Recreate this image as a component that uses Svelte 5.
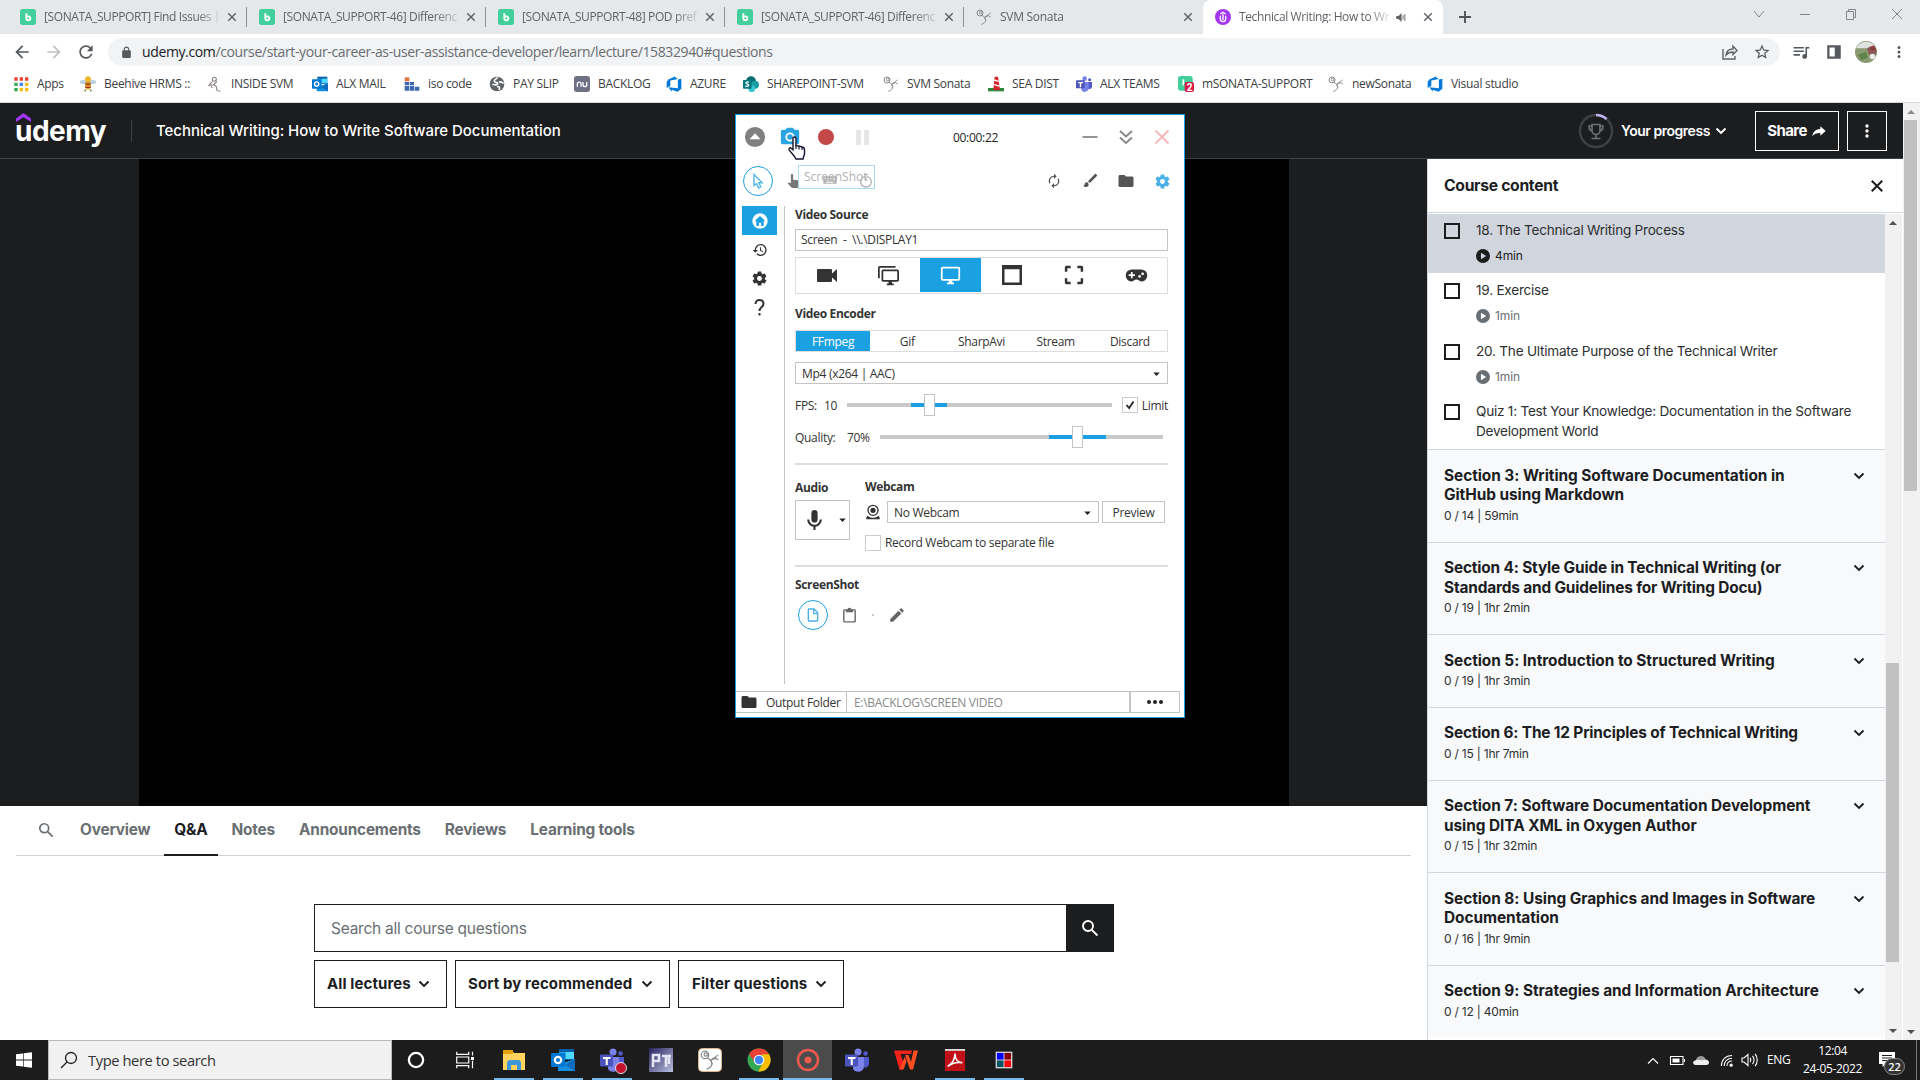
<script>
  const paths = {
    back: 'M20 11H7.83l5.59-5.59L12 4l-8 8 8 8 1.41-1.41L7.83 13H20v-2z',
    reload: 'M17.65 6.35C16.2 4.9 14.21 4 12 4c-4.42 0-7.99 3.58-7.99 8s3.57 8 7.99 8c3.73 0 6.84-2.55 7.73-6h-2.08c-.82 2.33-3.04 4-5.65 4-3.31 0-6-2.69-6-6s2.69-6 6-6c1.66 0 3.14.69 4.22 1.78L13 11h7V4l-2.35 2.35z',
    lock: 'M18 8h-1V6c0-2.76-2.24-5-5-5S7 3.24 7 6v2H6c-1.1 0-2 .9-2 2v10c0 1.1.9 2 2 2h12c1.1 0 2-.9 2-2V10c0-1.1-.9-2-2-2zM9 6c0-1.66 1.34-3 3-3s3 1.34 3 3v2H9V6z',
    star: 'M12,15.39L8.24,17.66L9.23,13.38L5.91,10.5L10.29,10.13L12,6.09L13.71,10.13L18.09,10.5L14.77,13.38L15.76,17.66M22,9.24L14.81,8.63L12,2L9.19,8.63L2,9.24L7.45,13.97L5.82,21L12,17.27L18.18,21L16.54,13.97L22,9.24Z',
    queue: 'M15 5H2v2h13V5zm0 4.500H2v2h13v-2zM2 16h8v-2H2v2zM17 5v9.180c-.31-.11-.65-.18-1-.18-1.660 0-3 1.340-3 3s1.340 3 3 3 3-1.340 3-3V7h3V5h-5z',
    panel: 'M3 3h18v18H3zM6 6v12h7V6z',
    dots: 'M12 8a2 2 0 1 0 0-4 2 2 0 0 0 0 4zm0 2a2 2 0 1 0 0 4 2 2 0 0 0 0-4zm0 6a2 2 0 1 0 0 4 2 2 0 0 0 0-4z',
    share: 'M14 9V5l8 7-8 7v-4c-6 0-9.500 1.500-12 5 .8-5 3.500-11 12-11z',
    gear: 'M12,15.5A3.5,3.5 0 0,1 8.5,12A3.5,3.5 0 0,1 12,8.5A3.5,3.5 0 0,1 15.5,12A3.5,3.5 0 0,1 12,15.5M19.43,12.97C19.47,12.65 19.5,12.33 19.5,12C19.5,11.67 19.47,11.34 19.43,11L21.54,9.37C21.73,9.22 21.78,8.95 21.66,8.73L19.66,5.27C19.54,5.05 19.27,4.96 19.05,5.05L16.56,6.05C16.04,5.66 15.5,5.32 14.87,5.07L14.5,2.42C14.46,2.18 14.25,2 14,2H10C9.75,2 9.54,2.18 9.5,2.42L9.13,5.07C8.5,5.32 7.96,5.66 7.44,6.05L4.95,5.05C4.73,4.96 4.46,5.05 4.34,5.27L2.34,8.73C2.21,8.95 2.27,9.22 2.46,9.37L4.57,11C4.53,11.34 4.5,11.67 4.5,12C4.5,12.33 4.53,12.65 4.57,12.97L2.46,14.63C2.27,14.78 2.21,15.05 2.34,15.27L4.34,18.73C4.46,18.95 4.73,19.03 4.95,18.95L7.44,17.94C7.96,18.34 8.5,18.68 9.13,18.93L9.5,21.58C9.54,21.82 9.75,22 10,22H14C14.25,22 14.46,21.82 14.5,21.58L14.87,18.93C15.5,18.67 16.04,18.34 16.56,17.94L19.05,18.95C19.27,19.03 19.54,18.95 19.66,18.73L21.66,15.27C21.78,15.05 21.73,14.78 21.54,14.63L19.43,12.97Z',
    history: 'M13.5,8H12V13L16.28,15.54L17,14.33L13.5,12.25V8M13,3A9,9 0 0,0 4,12H1L4.96,16.03L9,12H6A7,7 0 0,1 13,5A7,7 0 0,1 20,12A7,7 0 0,1 13,19C11.07,19 9.32,18.21 8.06,16.94L6.64,18.36C8.27,20 10.5,21 13,21A9,9 0 0,0 22,12A9,9 0 0,0 13,3',
    folder: 'M10,4H4C2.89,4 2,4.89 2,6V18A2,2 0 0,0 4,20H20A2,2 0 0,0 22,18V8C22,6.89 21.1,6 20,6H12L10,4Z',
    camera: 'M4,4H7L9,2H15L17,4H20A2,2 0 0,1 22,6V18A2,2 0 0,1 20,20H4A2,2 0 0,1 2,18V6A2,2 0 0,1 4,4M12,7A5,5 0 0,0 7,12A5,5 0 0,0 12,17A5,5 0 0,0 17,12A5,5 0 0,0 12,7M12,9A3,3 0 0,1 15,12A3,3 0 0,1 12,15A3,3 0 0,1 9,12A3,3 0 0,1 12,9Z',
    video: 'M17,10.5V7A1,1 0 0,0 16,6H3A1,1 0 0,0 2,7V18A1,1 0 0,0 3,19H16A1,1 0 0,0 17,18V14.500L22,19V6L17,10.5Z',
    monitor: 'M21,16H3V4H21M21,2H3C1.89,2 1,2.89 1,4V16A2,2 0 0,0 3,18H10V20H8V22H16V20H14V18H21A2,2 0 0,0 23,16V4C23,2.89 22.1,2 21,2Z',
    monitors: 'M22,17V7H6V17H22M22,5A2,2 0 0,1 24,7V17C24,18.11 23.1,19 22,19H16V21H18V23H10V21H12V19H6C4.89,19 4,18.11 4,17V7A2,2 0 0,1 6,5H22M2,3V15H0V3A2,2 0 0,1 2,1H20V3H2Z',
    window: 'M0,0H24V24H0V0M3,5V21H21V5H3Z',
    region: 'M1 8V3a2 2 0 0 1 2-2h5v3H4v4zM16 1h5a2 2 0 0 1 2 2v5h-3V4h-4zM23 16v5a2 2 0 0 1-2 2h-5v-3h4v-4zM8 23H3a2 2 0 0 1-2-2v-5h3v4h4z',
    pad: 'M6.500 5h11a7 7 0 0 1 1 13.900c-3 .3-4-2.400-6.500-2.400s-3.500 2.700-6.500 2.400A7 7 0 0 1 6.500 5zM5.600 8v2.600H3v2h2.600v2.600h2v-2.600h2.600v-2H7.600V8zM15.500 11.500a1.600 1.600 0 1 0 0 3.200 1.600 1.600 0 0 0 0-3.200zM19 8.500a1.600 1.600 0 1 0 0 3.200 1.600 1.600 0 0 0 0-3.200z',
    mic: 'M12,2A3,3 0 0,1 15,5V11A3,3 0 0,1 12,14A3,3 0 0,1 9,11V5A3,3 0 0,1 12,2M19,11C19,14.53 16.39,17.44 13,17.93V21H11V17.93C7.61,17.44 5,14.53 5,11H7A5,5 0 0,0 12,16A5,5 0 0,0 17,11H19Z',
    sync: 'M12,6V9L16,5L12,1V4A8,8 0 0,0 4,12C4,13.57 4.46,15.03 5.24,16.26L6.7,14.8C6.25,13.97 6,13 6,12A6,6 0 0,1 12,6M18.76,7.74L17.3,9.2C17.74,10.04 18,11 18,12A6,6 0 0,1 12,18V15L8,19L12,23V20A8,8 0 0,0 20,12C20,10.43 19.54,8.97 18.76,7.74Z',
    brush: 'M22.400 3.100L20.900 1.600C20.500 1.200 19.900 1.200 19.400 1.600L9,12.2L11.75,15L22.400 4.600C22.800 4.200 22.800 3.500 22.400 3.100M7,14A3,3 0 0,0 4,17C4,18.31 2.84,19 2,19C2.92,20.22 4.5,21 6,21A4,4 0 0,0 10,17A3,3 0 0,0 7,14Z',
    pencil: 'M20.71,7.04C21.1,6.65 21.1,6 20.71,5.63L18.37,3.29C18,2.9 17.35,2.9 16.96,3.29L15.12,5.12L18.87,8.87M3,17.25V21H6.75L17.81,9.93L14.06,6.18L3,17.25Z',
    timer: 'M12,20A7,7 0 0,1 5,13A7,7 0 0,1 12,6A7,7 0 0,1 19,13A7,7 0 0,1 12,20M12,4A9,9 0 0,0 3,13A9,9 0 0,0 12,22A9,9 0 0,0 21,13A9,9 0 0,0 12,4M9,1V3H11V10H13V3H15V1Z',
    hand: 'M9 1.500c1 0 1.700.8 1.700 1.700V10l6.800 1c1.300.3 2.300 1.200 2.300 2.600l-1.300 7c-.2 1-1 1.900-2.100 1.900H9.800c-.7 0-1.300-.3-1.700-.8L2.500 15.500l1-1c.4-.4.900-.5 1.500-.3l2.300 1V3.200c0-1 .8-1.700 1.700-1.700z',
    keys: 'M2 5h20v11H2zM4 7v1.500h2V7zm4 0v1.500h2V7zm4 0v1.500h2V7zm4 0v1.500h3V7zM4 10v1.500h2V10zm4 0v1.500h2V10zm4 0v1.500h2V10zm4 0v1.500h3V10zM6 13v1.500h11V13z',
    page: 'M6 2h8l6 6v12a2 2 0 0 1-2 2H6a2 2 0 0 1-2-2V4c0-1.100.9-2 2-2zm0 2v16h12v-9h-6V4zm8 .8V9h4z',
    clip: 'M19 3h-4.200a3 3 0 0 0-5.600 0H5a2 2 0 0 0-2 2v15a2 2 0 0 0 2 2h14a2 2 0 0 0 2-2V5a2 2 0 0 0-2-2zM5 5h2v2.500h10V5h2v15H5z',
    home: 'M12 .5a11.500 11.500 0 1 0 0 23 11.500 11.500 0 0 0 0-23zM12 4.500l8 7.500h-2.500v7.500h-4v-5h-3v5h-4V12H4z',
    up: 'M12 1a11 11 0 1 0 0 22 11 11 0 0 0 0-22zM12 8l6 6.500H6z',
    cam: 'M12 1a8.500 8.500 0 1 0 0 17 8.500 8.500 0 0 0 0-17zm0 2a6.500 6.500 0 1 1 0 13 6.500 6.500 0 0 1 0-13zm0 2.500a4 4 0 1 0 0 8 4 4 0 0 0 0-8zM4 17.500l-2 2.500v3h20v-3l-2-2.500c-2 2-5 3-8 3s-6-1-8-3z',
    play: 'M12 0a12 12 0 1 0 0 24 12 12 0 0 0 0-24zM8.500 6.500l9 5.500-9 5.500z'
  };

  // Multi-colour artwork, drawn in a 24-unit box
  const knot = '<g fill="none" stroke="#8a8a8a" stroke-width="1.500"><circle cx="6" cy="6" r="4.500"/><circle cx="7" cy="5.500" r="2"/><path d="M9 9.500c3 1.500 5 4 6 8M22 6c-3 1-3 3-6 4-2 1-3 3-2 6 1 4-3 6-6 7M13 12l6-2 3 2"/></g>';
  const devops = '<path fill="#0078d7" d="M1 8.500l3-3.800L12 1.600V.2l5.600 4.200L6.500 6.600v8.600L3.400 16 1 18.500zM23 4v15l-5.600 4.500-8.800-3v3L3.600 17l14.200 1.400V5.200z"/>';
  const teams = '<circle cx="13" cy="4" r="3.500" fill="#7b83eb"/><circle cx="20.500" cy="5.500" r="2.300" fill="#5059c9"/><path d="M17 9h7v7a4 4 0 0 1-6 3z" fill="#5059c9"/><path d="M8 9h11v8a6 6 0 0 1-11 4z" fill="#7b83eb"/><rect y="6.500" width="13" height="12" rx="1" fill="#4b53bc"/><path d="M3 9h7.500v2H7.800v6H5.700v-6H3z" fill="#fff"/>';
  const outlook = '<path fill="#0a5ea8" d="M8 1h15v11H8z"/><path fill="#28a8ea" d="M8 4h7v7H8z"/><path fill="#50d9ff" d="M15 4h8v7h-8z"/><path fill="#1490df" d="M7 11l8 3 9-3v12H7z"/><path fill="#0f6cbd" d="M24 11L14 17l10 6z"/><rect y="5" width="14" height="14" rx="1" fill="#0078d4"/><circle cx="7" cy="12" r="3.200" fill="none" stroke="#fff" stroke-width="2.200"/>';
  const art = {
    b: '<rect width="24" height="24" rx="4" fill="#42cf9c"/><path d="M9.500 6.500V14M9.500 14a3 3 0 1 0 3-3c-1.600 0-3 1.200-3 3z" fill="none" stroke="#fff" stroke-width="2.800"/>',
    b2: '<rect width="22" height="22" rx="4" fill="#42cf9c"/><path d="M8 5v9" stroke="#fff" stroke-width="2.500"/><rect x="10" y="9" width="14" height="15" rx="3" fill="#d81b4a"/><text x="13" y="22" font-family="Roboto" font-weight="700" font-size="15" fill="#fff">2</text>',
    knot,
    u: '<circle cx="12" cy="12" r="12" fill="#a435f0"/><path d="M8 10v5a4 4 0 0 0 8 0v-5M8 7.500l4-2.500 4 2.500M12 8v9" fill="none" stroke="#fff" stroke-width="2"/>',
    apps: '<g fill="#ea4335"><path d="M2 2h5v5H2zM10 2h5v5h-5zM18 2h5v5h-5z"/></g><path fill="#34a853" d="M2 10h5v5H2zM2 18h5v5H2z"/><path fill="#4285f4" d="M10 10h5v5h-5z"/><path fill="#fbbc04" d="M18 10h5v5h-5zM10 18h5v5h-5zM18 18h5v5h-5z"/>',
    bee: '<ellipse cx="5" cy="9" rx="5" ry="3" fill="#b9cfe0"/><ellipse cx="19" cy="9" rx="5" ry="3" fill="#b9cfe0"/><circle cx="12" cy="5" r="4.500" fill="#f0b929"/><ellipse cx="12" cy="14" rx="4.500" ry="6" fill="#d9a520"/><path d="M8 11h8v2H8zM8 16h8v2H8z" fill="#b0332a"/><path d="M9 20l-2 3M15 20l2 3" stroke="#6d8a3a" stroke-width="2"/>',
    walk: '<g fill="none" stroke="#8a7f80" stroke-width="1.600"><circle cx="11" cy="5" r="3"/><path d="M8 8l-5 6 7-1 5-5M10 13l4 3 1 6 5 1M6 15l2 3"/></g>',
    outlook,
    iso: '<path fill="#e0763f" d="M1 2h7v6H1z"/><path fill="#3c68b0" d="M1 9h7v5H1zM9 9h6v5H9zM1 15h7v7H1zM9 15h6v7H9zM16 16h7v6h-7z"/>',
    globe: '<circle cx="12" cy="12" r="11" fill="#5f6368"/><path d="M13 2c-2 3-6 3-5 6s6 1 5 4-6 0-8 1M15 9c3-1 5 1 7 2M12 16c3-1 5 1 3 5" fill="none" stroke="#fff" stroke-width="2.400"/>',
    nu: '<rect width="24" height="24" rx="4" fill="#6f6f86"/><path d="M5 16v-4a2.800 2.800 0 0 1 5.600 0v4M13.500 9v4a2.800 2.800 0 0 0 5.600 0V9" fill="none" stroke="#fff" stroke-width="2"/>',
    devops,
    sp: '<circle cx="12" cy="8" r="7.500" fill="#036c70"/><circle cx="18" cy="13" r="6" fill="#1a9ba1"/><circle cx="13" cy="19" r="5" fill="#37c6d0"/><rect y="6" width="13" height="13" rx="1" fill="#03787c"/><path d="M9 9.500c-3-1.500-5 .2-4.500 1.500.7 1.500 4.200 1 4 3-.2 1.800-3 2-5 .8" fill="none" stroke="#fff" stroke-width="1.800"/>',
    sea: '<path d="M0 18h24v5H0z" fill="#2c8a3c"/><path d="M10 1h5l3 20H8z" fill="#d4232c"/><path d="M10 5l6 2v2l-7-2zM9 12l8 2v2l-8-2z" fill="#fff"/>',
    teams,
    pt: '<linearGradient id="ptg" x1="0" y1="0" x2="1" y2="1"><stop offset="0" stop-color="#27215f"/><stop offset="1" stop-color="#b9c0de"/></linearGradient><rect width="24" height="24" fill="url(#ptg)"/><path d="M4 19V7h6v6H4M13 8h9M17 8v11M20 8v8" fill="none" stroke="#e6e4f4" stroke-width="2.600"/>',
    knotbox: '<rect x=".5" y=".5" width="23" height="23" rx="4" fill="#fff" stroke="#e0b58e"/><g transform="translate(2 2) scale(.83)">' + knot + '</g>',
    explorer: '<path d="M1 2h9l2 3h11v17H1z" fill="#ffd35c"/><path d="M1 2h10v4H1z" fill="#e3a008"/><path d="M5 22v-8l2-2h10l2 2v8h-4v-5H9v5z" fill="#3e96dc"/>',
    chrome: '<circle cx="12" cy="12" r="11.500" fill="#34a853"/><path d="M12 .5A11.500 11.500 0 0 1 22 6.300L12 7 8 14.500 2 6.300A11.500 11.500 0 0 1 12 .5z" fill="#ea4335"/><path d="M22 6.300a11.500 11.500 0 0 1-10.800 17.200L16.500 14 15 6.300z" fill="#fbbc04"/><circle cx="12" cy="12" r="5.300" fill="#fff"/><circle cx="12" cy="12" r="4.200" fill="#4285f4"/>',
    rec: '<circle cx="12" cy="12" r="10" fill="none" stroke="#ec5b4d" stroke-width="2.600"/><circle cx="12" cy="12" r="3.500" fill="#ec5b4d"/>',
    wps: '<path d="M0 2.500h18l-1 3.500H6.500l3.500 10-2 5.500H5.500z" fill="#f5231c"/><path d="M5.500 21.500h4l3-8-1.800-5-2.500 7z" fill="#ff4a26"/><path d="M11 7l5 14.500h3L24 2.500h-4.500L17 14l-2.500-7z" fill="#ff4f22"/>',
    pdf: '<rect x="1" width="22" height="24" fill="#c01018"/><path d="M1 0h22v2H1z" fill="#ddd"/><path d="M4 19c5-3 8-8 8-14 0 6 3 10 8 10-6-1-11 0-16 4z" fill="none" stroke="#fff" stroke-width="1.700"/>',
    flag: '<rect x="2" y="2" width="20" height="20" fill="#ddd"/><path fill="#00f" d="M3.500 3.500h8v8h-8z"/><path fill="#8b0000" d="M12.500 3.500h8v8h-8z"/><path fill="#0b5563" d="M3.500 12.500h8v8h-8z"/><path fill="red" d="M12.500 12.500h8v8h-8z"/>',
    start: '<path fill="#fff" d="M0 3.500l10.500-1.400v9.300H0zM11.500 2L24 .3v11.100H11.500zM0 12.600h10.500v9.300L0 20.500zM11.500 12.600H24v11.100L11.500 22z"/>',
    cortana: '<circle cx="12" cy="12" r="9.500" fill="none" stroke="#fff" stroke-width="3"/>',
    taskview: '<g fill="none" stroke="#fff" stroke-width="1.600"><path d="M1 1v3.500h16V1M1 23v-3.500h16V23M1 8h16v8H1zM22 1v5M22 13v10"/></g><path fill="#fff" d="M20 8h4v4h-4z"/>',
    avatar: '<circle cx="12" cy="12" r="12" fill="#8a9a70"/><path d="M1 8a12 12 0 0 1 22 0z" fill="#dfe3df"/><path d="M13 8l7-3 4 6-4 9-5-6z" fill="#8d5a58"/><path d="M15 7l6-2 2 4-4 2z" fill="#8a3b40"/><circle cx="19" cy="17" r="3" fill="#eee"/><path d="M3 15l9-3 2 6-7 3z" fill="#5f8248"/>'
  };

  const tabs = [
    { icon: 'b', text: '[SONATA_SUPPORT] Find Issues |' },
    { icon: 'b', text: '[SONATA_SUPPORT-46] Differenc' },
    { icon: 'b', text: '[SONATA_SUPPORT-48] POD pref' },
    { icon: 'b', text: '[SONATA_SUPPORT-46] Differenc' },
    { icon: 'knot', text: 'SVM Sonata', plain: true },
    { icon: 'u', text: 'Technical Writing: How to Wr', active: true }
  ];
  const bookmarks = [
    ['apps', 'Apps'], ['bee', 'Beehive HRMS ::'], ['walk', 'INSIDE SVM'], ['outlook', 'ALX MAIL'], ['iso', 'iso code'],
    ['globe', 'PAY SLIP'], ['nu', 'BACKLOG'], ['devops', 'AZURE'], ['sp', 'SHAREPOINT-SVM'], ['knot', 'SVM Sonata'],
    ['sea', 'SEA DIST'], ['teams', 'ALX TEAMS'], ['b2', 'mSONATA-SUPPORT'], ['knot', 'newSonata'], ['devops', 'Visual studio']
  ];
  const lectures = [
    { title: '18. The Technical Writing Process', time: '4min', on: true },
    { title: '19. Exercise', time: '1min' },
    { title: '20. The Ultimate Purpose of the Technical Writer', time: '1min' }
  ];
  const sections = [
    [['Section 3: Writing Software Documentation in', 'GitHub using Markdown'], '0 / 14 | 59min'],
    [['Section 4: Style Guide in Technical Writing (or', 'Standards and Guidelines for Writing Docu)'], '0 / 19 | 1hr 2min'],
    [['Section 5: Introduction to Structured Writing'], '0 / 19 | 1hr 3min'],
    [['Section 6: The 12 Principles of Technical Writing'], '0 / 15 | 1hr 7min'],
    [['Section 7: Software Documentation Development', 'using DITA XML in Oxygen Author'], '0 / 15 | 1hr 32min'],
    [['Section 8: Using Graphics and Images in Software', 'Documentation'], '0 / 16 | 1hr 9min'],
    [['Section 9: Strategies and Information Architecture'], '0 / 12 | 40min']
  ];
  const pageTabs = ['Overview', 'Q&A', 'Notes', 'Announcements', 'Reviews', 'Learning tools'];
  const apps = [
    ['cortana', 's18'], ['taskview', 's18'], ['explorer', 's24', 'open'], ['outlook', 's24', 'open'], ['teams', 's24', 'open dot'],
    ['pt', 's24'], ['knotbox', 's24'], ['chrome', 's24', 'open'], ['rec', 's24', 'current'], ['teams', 's24'],
    ['wps', 's24'], ['pdf', 's22', 'open'], ['flag', 's20', 'open']
  ];
  const sources = ['video', 'monitors', 'monitor', 'window', 'region', 'pad'];
  const encoders = ['FFmpeg', 'Gif', 'SharpAvi', 'Stream', 'Discard'];
</script>

{#snippet ic(name, size)}
  <svg class={size} viewBox="0 0 24 24" fill="currentColor" fill-rule="evenodd"><path d={paths[name]} /></svg>
{/snippet}
{#snippet pic(name, size)}
  <svg class={size} viewBox="0 0 24 24">{@html art[name]}</svg>
{/snippet}
{#snippet chevron(size)}
  <svg class={size} viewBox="0 0 12 12" fill="none" stroke="currentColor" stroke-width="1.900"><path d="M1.500 3.500L6 8l4.500-4.500" /></svg>
{/snippet}
{#snippet cross(size)}
  <svg class={size} viewBox="0 0 12 12" fill="none" stroke="currentColor" stroke-width="1.700"><path d="M1.500 1.500l9 9M10.500 1.500l-9 9" /></svg>
{/snippet}
{#snippet lens(size)}
  <svg class={size} viewBox="0 0 18 18" fill="none" stroke="currentColor" stroke-width="1.900"><circle cx="7" cy="7" r="5" /><path d="M10.800 10.800L16.500 16.500" /></svg>
{/snippet}
{#snippet caret()}
  <svg class="caret" viewBox="0 0 8 5"><path d="M0 .5h8L4 5z" fill="#222" /></svg>
{/snippet}

<div class="screen">
  <div class="strip">
    {#each tabs as t}
      <div class="tab" class:active={t.active} class:plain={t.plain}>
        {@render pic(t.icon, 's16')}
        <span class="tabtext">{t.text}</span>
        {#if t.active}
          <svg class="sound" viewBox="0 0 14 12"><path d="M0 4h3l4-4v12L3 8H0z" fill="#5f6368" /><path d="M9 3v6M11.500 1.500v9" stroke="#5f6368" stroke-width="1.200" /></svg>
        {/if}
        {@render cross('s9')}
      </div>
    {/each}
    <svg class="plus" viewBox="0 0 12 12"><path d="M6 0v12M0 6h12" stroke="#50545a" stroke-width="1.900" /></svg>
    <div class="winctl">
      <svg viewBox="0 0 12 12"><path d="M1 3l5 6 5-6" /></svg>
      <svg viewBox="0 0 12 12"><path d="M1 6.500h10" /></svg>
      <svg viewBox="0 0 12 12"><path d="M1.500 3.500h7v8h-7zM3.500 3.500v-2h7v8h-2" /></svg>
      <svg viewBox="0 0 12 12"><path d="M1 1l10 10M11 1L1 11" /></svg>
    </div>
  </div>

  <div class="toolbar">
    <div class="nav">
      {@render ic('back', 's20')}
      <span class="fwd">{@render ic('back', 's20')}</span>
      {@render ic('reload', 's20')}
    </div>
    <div class="address">
      {@render ic('lock', 's13')}
      <span class="url"><b>udemy.com</b>/course/start-your-career-as-user-assistance-developer/learn/lecture/15832940#questions</span>
      <svg class="s16" viewBox="0 0 16 16" fill="none" stroke="#5f6368" stroke-width="1.400"><path d="M1 5v10h12v-3M4 11c.5-4 3-6 7-6V2l4 4.500-4 4V8c-3 0-5 .6-7 3z" /></svg>
      {@render ic('star', 's18')}
    </div>
    <div class="tools">
      {@render ic('queue', 's19')}
      {@render ic('panel', 's18')}
      {@render pic('avatar', 's22')}
      {@render ic('dots', 's18')}
    </div>
  </div>

  <div class="bookmarks">
    {#each bookmarks as [icon, text]}
      <div class="mark">{@render pic(icon, 's16')}<span>{text}</span></div>
    {/each}
  </div>

  <div class="page">
    <div class="view">
      <header>
        <div class="logo"><svg class="hat" viewBox="0 0 15 9"><path d="M0 5.500L7.500 0 15 5.500V9L7.500 4.200 0 9z" fill="#a435f0" /></svg><span>udemy</span></div>
        <div class="rule"></div>
        <h1>Technical Writing: How to Write Software Documentation</h1>
        <svg class="trophy" viewBox="0 0 36 36" fill="none"><circle cx="18" cy="18" r="16" stroke="#3e4143" stroke-width="2.500" /><path d="M18 2a16 16 0 0 1 10.500 4" stroke="#c0b4f0" stroke-width="2.500" /><path d="M14 11.500h8v6a4 4 0 0 1-8 0zM14 13h-3c0 3 1 5 3.500 5M22 13h3c0 3-1 5-3.500 5M18 21.500V25M13.500 25.500h9" stroke="#6a6f73" stroke-width="1.700" /></svg>
        <span class="progress">Your progress</span>
        {@render chevron('s12')}
        <div class="btn share">Share {@render ic('share', 's16')}</div>
        <div class="btn more">{@render ic('dots', 's20')}</div>
      </header>
      <div class="columns">
        <main>
          <div class="player"><div class="video"></div></div>
          <nav>
            <span class="find">{@render lens('s16')}</span>
            {#each pageTabs as p}
              <span class="ptab" class:chosen={p === 'Q&A'}>{p}</span>
            {/each}
          </nav>
          <div class="qa">
            <div class="searchrow">
              <div class="field">Search all course questions</div>
              <div class="go">{@render lens('s18')}</div>
            </div>
            <div class="filters">
              <div class="filter f1">All lectures {@render chevron('s12')}</div>
              <div class="filter f2">Sort by recommended {@render chevron('s12')}</div>
              <div class="filter f3">Filter questions {@render chevron('s12')}</div>
            </div>
          </div>
        </main>
        <aside>
          <div class="asidehead"><h2>Course content</h2>{@render cross('s14')}</div>
          <div class="scroller">
            <div class="list">
              {#each lectures as l}
                <div class="lecture" class:on={l.on}>
                  <i class="box"></i>
                  <div><p>{l.title}</p><p class="time">{@render ic('play', 's14')}{l.time}</p></div>
                </div>
              {/each}
              <div class="lecture quiz">
                <i class="box"></i>
                <div><p>Quiz 1: Test Your Knowledge: Documentation in the Software</p><p>Development World</p></div>
              </div>
              {#each sections as [lines, meta]}
                <section class:single={lines.length === 1}>
                  <div class="st">
                    {#each lines as line}<h3>{line}</h3>{/each}
                    <p class="meta">{meta}</p>
                  </div>
                  {@render chevron('s12')}
                </section>
              {/each}
            </div>
            <div class="bar inner"><svg viewBox="0 0 8 4"><path d="M0 4L4 0l4 4z" fill="#505050" /></svg><div class="thumb"></div><svg viewBox="0 0 8 4"><path d="M0 0h8L4 4z" fill="#505050" /></svg></div>
          </div>
        </aside>
      </div>
    </div>
    <div class="bar outer"><svg viewBox="0 0 8 4"><path d="M0 4L4 0l4 4z" fill="#8b8b8b" /></svg><div class="thumb"></div><svg viewBox="0 0 8 4"><path d="M0 0h8L4 4z" fill="#505050" /></svg></div>
  </div>

  <footer>
    <div class="startbtn">{@render pic('start', 's16')}</div>
    <div class="tasksearch">
      <svg class="s18" viewBox="0 0 18 18" fill="none" stroke="#1c1c1c" stroke-width="1.300"><circle cx="11" cy="7" r="5.500" /><path d="M7 11l-6 6" /></svg>
      <span>Type here to search</span>
    </div>
    <div class="apps">
      {#each apps as [name, size, state]}
        <div class="app {state ?? ''}">{@render pic(name, size)}</div>
      {/each}
    </div>
    <div class="tray">
      <svg class="tup" viewBox="0 0 12 7"><path d="M1 6.500l5-5 5 5" /></svg>
      <svg class="tbat" viewBox="0 0 15 9"><path d="M.5.5h12.500v8H.5zM14.500 3v3" /><path d="M2.500 2.500h7v4h-7z" fill="#fff" stroke="none" /></svg>
      <svg class="tcloud" viewBox="0 0 16 10"><path d="M3 6a5 5 0 0 1 9-3l1 4H3z" fill="#999" stroke="none" /><path d="M1 6c3-2 6-1 8-.5 3-2 7-.5 7 2 0 1.500-1 2.500-2.500 2.500h-11C0 10-.5 7 1 6z" fill="#eee" stroke="none" /></svg>
      <svg class="twifi" viewBox="0 0 14 14"><path d="M1.500 13C1.500 6 6 1.500 13 1.500M4.500 13c0-5 3.500-8.500 8.500-8.500M7.500 13c0-3.500 2-5.500 5.500-5.500" /><circle cx="12" cy="12" r="1.700" fill="#fff" stroke="none" /></svg>
      <svg class="tvol" viewBox="0 0 17 14"><path d="M1 5h2l4-3.500v11L3 9H1zM9 5c1 1 1 3 0 4M11.500 3c2 2 2 6 0 8M14 1c3 3 3 9 0 12" /></svg>
      <span class="eng">ENG</span>
      <div class="clock"><span>12:04</span><span>24-05-2022</span></div>
      <div class="note"><svg viewBox="0 0 16 15"><path d="M0 0h16v12h-9l-3.500 3v-3H0z" fill="#fff" stroke="none" /><path d="M3 3.500h10M3 6h10M3 8.500h6" stroke="#1c1c1c" stroke-width="1.200" /></svg><em>22</em></div>
    </div>
  </footer>

  <div class="recorder">
    <div class="rrow">
      <div class="group top">
        <i class="gray">{@render ic('up', 's22')}</i>
        <i class="blue">{@render ic('camera', 's22')}</i>
        <i><b class="disc"></b></i>
        <i><b class="pause"></b></i>
      </div>
      <div class="timer">00:00:22</div>
      <div class="group wctl">
        <i><svg viewBox="0 0 16 16"><path d="M.5 8h15" stroke="#8a8a8a" stroke-width="1.800" /></svg></i>
        <i><svg viewBox="0 0 16 16" fill="none"><path d="M2 2l6 5.500L14 2M2 8.500L8 14l6-5.500" stroke="#8a8a8a" stroke-width="2" /></svg></i>
        <i><svg viewBox="0 0 16 16"><path d="M1.500 1.500l13 13M14.500 1.500l-13 13" stroke="#f5b9b9" stroke-width="1.900" /></svg></i>
      </div>
    </div>
    <div class="rrow second">
      <div class="group">
        <i><b class="ring"><svg class="s16" viewBox="0 0 16 16" fill="none" stroke="#57b9ea" stroke-width="1.400"><path d="M4 1.500v11l2.500-2 2 4.500 2.300-1-2-4.300h3.400z" /></svg></b></i>
        <i class="mid">{@render ic('hand', 's15')}</i>
        <i class="mid">{@render ic('keys', 's16')}</i>
        <i class="mid">{@render ic('timer', 's15')}</i>
      </div>
      <div class="group dark">
        <i>{@render ic('sync', 's15')}</i>
        <i>{@render ic('brush', 's16')}</i>
        <i>{@render ic('folder', 's18')}</i>
        <i class="sky">{@render ic('gear', 's17')}</i>
      </div>
    </div>
    <div class="rbody">
      <div class="rside">
        <i class="sel">{@render ic('home', 's15')}</i>
        <i>{@render ic('history', 's16')}</i>
        <i>{@render ic('gear', 's17')}</i>
        <i><svg class="s17" viewBox="0 0 17 17" fill="none" stroke="currentColor" stroke-width="2"><path d="M4.500 5c0-5.300 8-5.300 8 0 0 3-4 3.300-4 7M8.500 14v2.400" /></svg></i>
      </div>
      <div class="pane">
        <h4>Video Source</h4>
        <div class="input source">Screen&nbsp; - &nbsp;\\.\DISPLAY1</div>
        <div class="sources">
          {#each sources as s}<i class:sel={s === 'monitor'}>{@render ic(s, s === 'region' || s === 'window' ? 's20' : s === 'video' ? 's24' : 's21')}</i>{/each}
        </div>
        <h4 class="enc">Video Encoder</h4>
        <div class="encoders">
          {#each encoders as e, n}<span class:sel={n === 0}>{e}</span>{/each}
        </div>
        <div class="input low codec"><span>Mp4 (x264 | AAC)</span>{@render caret()}</div>
        <div class="slider fps">
          <span class="lab">FPS:</span><span class="val">10</span>
          <div class="track"><b></b><u></u></div>
          <i class="check"><svg viewBox="0 0 16 16"><path d="M4 8l3 3.500L12 4" fill="none" stroke="#222" stroke-width="2" /></svg></i>
          <span>Limit</span>
        </div>
        <div class="slider quality">
          <span class="lab">Quality:</span><span class="val">70%</span>
          <div class="track"><b></b><u></u></div>
        </div>
        <div class="av">
          <div class="audio"><h4>Audio</h4><div class="micbox">{@render ic('mic', 's25')}{@render caret()}</div></div>
          <div class="web">
            <h4>Webcam</h4>
            <div class="webrow">{@render ic('cam', 's16')}<div class="input low cams"><span>No Webcam</span>{@render caret()}</div><div class="input low preview">Preview</div></div>
            <div class="webrow sep"><i class="check"></i><span>Record Webcam to separate file</span></div>
          </div>
        </div>
        <h4 class="shot">ScreenShot</h4>
        <div class="shots">
          <i><b class="ring sky">{@render ic('page', 's16')}</b></i>
          <i>{@render ic('clip', 's17')}</i>
          <i class="tiny"><b></b></i>
          <i>{@render ic('pencil', 's18')}</i>
        </div>
      </div>
    </div>
    <div class="out">
      <div class="o1">{@render ic('folder', 's18')}<span>Output Folder</span></div>
      <div class="o2">E:\BACKLOG\SCREEN VIDEO</div>
      <div class="o3"><b></b><b></b><b></b></div>
    </div>
    <div class="tip">ScreenShot</div>
    <svg class="cursor" viewBox="0 0 18 24"><path d="M5 2.500c0-2 3-2 3 0v7l5.500 1.200c2 .4 3 1.300 3 3v3.800c0 1.500-1 3-1.500 5.500H8C6.500 19.500 3 17 1.200 13.800c-.8-1.500.8-2.600 2-1.600L5 13.800z" fill="#fff" stroke="#15152c" stroke-width="1.400" /><path d="M8 9v4M11 10.500v3M14 11.500v2.500" stroke="#15152c" stroke-width="1.200" /></svg>
  </div>
</div>

<style>
  :global(body) { margin: 0; }
  .screen { position: relative; width: 1920px; height: 1080px; overflow: hidden; display: flex; flex-direction: column; background: #fff; font-family: 'Open Sans', sans-serif; font-size: 12px; line-height: 1; color: #3c4043; white-space: nowrap; }
  .screen :global(*) { box-sizing: border-box; }
  svg { display: block; flex: none; overflow: visible; }
  h1, h2, h3, h4, p { margin: 0; }
  i, em, u { font-style: normal; text-decoration: none; }
  .s9 { width: 10px; height: 10px; } .s12 { width: 12px; height: 12px; } .s13 { width: 13px; height: 13px; }
  .s14 { width: 14px; height: 14px; } .s15 { width: 16px; height: 16px; } .s16 { width: 16px; height: 16px; } .s17 { width: 17px; height: 17px; }
  .s18 { width: 18px; height: 18px; } .s19 { width: 19px; height: 19px; } .s20 { width: 20px; height: 20px; } .s21 { width: 21px; height: 21px; }
  .s22 { width: 22px; height: 22px; } .s24 { width: 24px; height: 24px; } .s25 { width: 25px; height: 25px; }

  .strip { height: 34px; flex: none; background: #e4e8eb; display: flex; align-items: center; padding-left: 8px; }
  .tab { width: 239px; height: 34px; display: flex; align-items: center; padding: 0 10px 0 12px; color: #5f6368; background: linear-gradient(#8e9296, #8e9296) right center / 1px 20px no-repeat; }
  .tab.plain { background: none; }
  .tab.active { width: 240px; background: #fff; border-radius: 8px 8px 0 0; }
  .tabtext { flex: 1; margin: 0 7px 0 8px; letter-spacing: -.38px; mask-image: linear-gradient(90deg, #000 86%, rgba(0, 0, 0, .15)); }
  .plain .tabtext { letter-spacing: -.28px; }
  .sound { width: 11px; height: 9px; margin-right: 16px; }
  .active .tabtext { width: 150px; flex: 1 0 150px; }
  .plus { width: 12px; height: 12px; margin-left: 16px; }
  .winctl { margin: -6px 17px 0 auto; display: flex; gap: 34px; }
  .winctl svg { width: 12px; height: 12px; fill: none; stroke: #80868b; stroke-width: 1; }

  .toolbar { height: 32px; flex: none; padding-top: 4px; display: flex; color: #55595e; }
  .nav { width: 108px; display: flex; align-items: center; gap: 12px; padding-left: 12px; }
  .fwd { transform: scaleX(-1); color: #bfc1c4; }
  .address { width: 1672px; height: 28px; border-radius: 14px; background: #f1f3f4; display: flex; align-items: center; padding: 0 9px 0 12px; }
  .url { flex: 1; margin-left: 9px; font-size: 14px; letter-spacing: -.375px; color: #696d72; }
  .url b { font-weight: 400; color: #202124; }
  .address .s18 { margin-left: 15px; }
  .tools { display: flex; align-items: center; padding-left: 12px; gap: 14px; }
  .tools .s22 { margin-left: -2px; }
  .tools .s18:last-child { margin-left: -1px; }

  .bookmarks { height: 37px; flex: none; padding-left: 13px; border-bottom: 1px solid #d6d8da; display: grid; align-items: center; grid-template-columns: 67px 127px 105px 92px 85px 85px 92px 77px 140px 105px 88px 102px 150px 99px 120px; }
  .mark { display: flex; align-items: center; gap: 8px; letter-spacing: -.3px; }

  .page { height: 937px; display: flex; }
  .view { width: 1903px; font-family: Inter, 'Liberation Sans', sans-serif; color: #1c1d1f; }
  header { height: 56px; background: #1c1d1f; border-bottom: 1px solid #3e4143; display: flex; align-items: center; color: #fff; }
  .logo { position: relative; width: 115px; padding-left: 15px; }
  .logo span { display: block; font: 700 28px/34px Inter, sans-serif; letter-spacing: -.500px; }
  .hat { position: absolute; left: 16px; top: -1px; width: 15px; height: 9px; }
  .rule { width: 1px; height: 22px; background: #3e4143; margin-left: 16px; }
  h1 { margin-left: 24px; font-size: 15px; font-weight: 500; letter-spacing: -.05px; }
  .trophy { width: 36px; height: 36px; margin-left: auto; margin-right: 6px; }
  .progress { width: 95px; padding-left: 1px; font-size: 14px; font-weight: 600; letter-spacing: -.47px; }
  .btn { height: 40px; border: 1px solid #fff; display: flex; align-items: center; justify-content: center; gap: 4px; font-size: 15px; font-weight: 700; letter-spacing: -.6px; }
  .share { width: 84px; margin-left: 28px; } .more { width: 40px; margin: 0 16px 0 8px; }
  .columns { display: flex; height: 881px; }
  main { width: 1427px; }
  .player { height: 647px; background: #1c1d1f; padding-left: 139px; }
  .video { width: 1150px; height: 100%; background: #000; }
  nav { width: 1395px; height: 50px; margin-left: 16px; border-bottom: 1px solid #d1d2d4; display: flex; font-size: 15.400px; font-weight: 700; color: #6a6f73; line-height: 48px; letter-spacing: -.2px; }
  .find { width: 54px; padding: 16px 0 0 22px; }
  .ptab { height: 50px; padding: 0 10px; margin-right: 4px; }
  .chosen { color: #1c1d1f; border-bottom: 2px solid #1c1d1f; }
  .qa { padding: 48px 0 0 314px; }
  .searchrow { display: flex; height: 48px; width: 800px; }
  .field { width: 752px; border: 1px solid #1c1d1f; border-right: 0; padding-left: 16px; line-height: 47px; font-size: 15.500px; letter-spacing: -.25px; color: #6a6f73; }
  .go { width: 48px; background: #1c1d1f; color: #fff; display: grid; place-items: center; }
  .filters { display: flex; gap: 8px; margin-top: 8px; }
  .filter { height: 48px; border: 1px solid #1c1d1f; display: flex; align-items: center; justify-content: space-between; padding: 0 16px 1px 12px; font-size: 15px; font-weight: 700; letter-spacing: .1px; }
  .f1 { width: 133px; } .f2 { width: 215px; } .f3 { width: 166px; padding-left: 13px; }

  aside { width: 476px; border-left: 1px solid #d1d7dc; }
  .asidehead { height: 54px; border-bottom: 1px solid #d1d7dc; display: flex; align-items: center; justify-content: space-between; padding: 0 19px 0 16px; }
  h2 { font-size: 15.700px; font-weight: 700; letter-spacing: -.3px; }
  .scroller { display: flex; height: 827px; padding-top: 1px; overflow: hidden; }
  .list { width: 457px; }
  .lecture { display: flex; height: 60px; padding: 7px 16px 0; font-size: 13.600px; letter-spacing: -.24px; color: #2d2f31; }
  .lecture:nth-child(2) { height: 61px; }
  .lecture:nth-child(3) { padding-top: 7px; }
  .lecture p { line-height: 20px; }
  .lecture .time { display: flex; align-items: center; gap: 5px; margin-top: 6px; font-size: 12px; color: #6a6f73; letter-spacing: -.1px; }
  .lecture.on { height: 59px; padding-top: 6px; background: #d1d5dd; }
  .on .time { color: #1c1d1f; }
  .box { width: 16px; height: 16px; border: 2px solid #1c1d1f; margin: 3px 16px 0 0; flex: none; }
  .lecture.quiz { height: 55.300px; }
  section { height: 92.500px; background: #f8f9fb; border-top: 1px solid #d1d7dc; padding: 15.500px 20px 0 16px; display: flex; justify-content: space-between; }
  section.single { height: 72.700px; }
  section .s12 { margin-top: 4px; }
  h3 { font-size: 15.400px; font-weight: 700; line-height: 19.600px; letter-spacing: -.05px; }
  section:nth-of-type(2) h3, section:nth-of-type(4) h3 { letter-spacing: -.16px; }
  .meta { font-size: 12px; line-height: 22px; letter-spacing: -.2px; color: #2d2f31; }
  .bar { background: #f1f1f1; display: flex; flex-direction: column; align-items: center; }
  .bar svg { width: 8px; height: 4px; }
  .inner { width: 18px; padding: 7px 2px 7px 0; border-right: 1px solid #fff; }
  .inner .thumb { width: 13px; height: 299px; margin: 438px 0 auto; background: #c1c1c1; }
  .outer { width: 17px; padding: 7px 2px 6px 0; }
  .outer .thumb { width: 13px; height: 371px; margin: 6px 0 auto; background: #c1c1c1; }

  footer { height: 40px; flex: none; background: #1c1c1c; display: flex; color: #fff; }
  .startbtn { width: 48px; display: grid; place-items: center; }
  .tasksearch { width: 344px; background: #f1f1f1; border: 1px solid #b9b9b9; display: flex; align-items: center; gap: 10px; padding-left: 11px; font-size: 14.700px; letter-spacing: -.4px; color: #333; }
  .apps { display: flex; margin-left: -1px; }
  .app { width: 49px; height: 40px; display: grid; place-items: center; position: relative; }
  .open { background: linear-gradient(#76b9ed, #76b9ed) center bottom / 40px 2px no-repeat; }
  .current { background: linear-gradient(#76b9ed, #76b9ed) center bottom / 49px 2px no-repeat, #4b4b4b; }
  .dot::after { content: ''; position: absolute; right: 9px; bottom: 6px; width: 10px; height: 10px; border-radius: 50%; background: #c4122f; border: 1px solid #ddd; }
  .tray { margin-left: auto; display: flex; align-items: center; padding-right: 3px; }
  .tray svg { fill: none; stroke: #fff; stroke-width: 1.100; }
  .tup { width: 12px; height: 7px; } .tbat { width: 15px; height: 9px; margin-left: 11px; } .tcloud { width: 16px; height: 10px; margin-left: 8px; }
  .twifi { width: 13px; height: 13px; margin-left: 11px; } .tvol { width: 17px; height: 14px; margin-left: 8px; }
  .eng { margin-left: 9px; width: 36px; letter-spacing: -.4px; }
  .clock { width: 58px; display: grid; justify-items: center; gap: 6px; letter-spacing: -.35px; }
  .note { position: relative; height: 40px; padding: 12px 0 0 18px; border-right: 1px solid #777; width: 56px; }
  .note svg { width: 16px; height: 15px; }
  .note em { position: absolute; left: 23px; top: 18px; width: 21px; height: 17px; border-radius: 9px; border: 1px solid #888; background: #333; font-size: 11px; font-weight: 600; line-height: 15px; text-align: center; }

  .recorder { position: absolute; left: 735px; top: 114px; width: 450px; height: 604px; background: #fff; border: 1px solid #1ba1e2; display: flex; flex-direction: column; color: #333; letter-spacing: -.3px; }
  .rrow { display: flex; height: 44px; justify-content: space-between; padding: 0 4px 0 1px; align-items: center; flex: none; }
  .second { padding-left: 4px; }
  .group { display: flex; }
  .group i { width: 36px; display: grid; place-items: center; }
  .top i + i { margin-left: -1px; margin-right: 1px; }
  .wctl svg { width: 16px; height: 16px; }
  .gray { color: #808080; } .blue { color: #2aa5e2; } .mid { color: #777; } .dark { color: #555; } .dark .sky, .sky { color: #49b1e8; }
  .disc { width: 16px; height: 16px; border-radius: 50%; background: #c54848; }
  .pause { width: 13px; height: 15px; border: solid #e6e6e6; border-width: 0 5px; }
  .timer { color: #222; padding-top: 1px; margin-left: -2px; }
  .ring { width: 30px; height: 30px; border: 1px solid #1ba1e2; border-radius: 50%; display: grid; place-items: center; }
  .rbody { height: 488px; display: flex; }
  .rside { width: 42px; padding: 3px 0 0 6px; }
  .rside i { width: 35px; height: 29px; display: grid; place-items: center; }
  .sel { background: #1ba1e2; color: #fff; }
  .pane { width: 390px; margin-top: 3px; height: 478px; border-left: 1px solid #c4c4c4; margin-left: 6px; padding-left: 10px; }
  h4 { font-size: 12px; font-weight: 700; letter-spacing: -.35px; line-height: 18px; }
  .input { height: 22px; border: 1px solid #c4c4c4; display: flex; align-items: center; justify-content: space-between; padding: 0 6px; background: #fff; }
  .low { padding-top: 1px; }
  .caret { width: 7px; height: 4px; }
  .source { margin-top: 5px; width: 373px; padding-left: 5px; }
  .sources { margin-top: 6px; width: 373px; height: 37px; border: 1px solid #ddd; display: grid; grid-template-columns: repeat(6, 1fr); }
  .sources i { display: grid; place-items: center; margin-bottom: 1px; }
  .enc { margin-top: 10px; padding-top: 1px; height: 18px; }
  .encoders { margin-top: 8px; width: 373px; height: 22px; border: 1px solid #ddd; display: grid; grid-template-columns: repeat(5, 1fr); text-align: center; line-height: 21.500px; }
  .encoders span { height: 20px; }
  .codec { width: 373px; margin-top: 10px; padding-right: 7px; }
  .slider { display: flex; align-items: center; height: 22px; width: 373px; margin-top: 10px; }
  .slider span { padding-top: 1.500px; }
  .track { position: relative; height: 4px; background: #c9c9c9; }
  .track b { position: absolute; top: 0; height: 4px; background: #1ba1e2; }
  .track u { position: absolute; top: -9px; width: 11px; height: 22px; border: 1px solid #c4c4c4; background: #fff; }
  .fps .lab { width: 29px; } .fps .val { width: 23px; } .fps .track { width: 265px; margin-right: 10px; }
  .fps b { left: 64px; width: 36px; } .fps u { left: 77px; }
  .quality .lab { width: 52px; } .quality .val { width: 33px; } .quality .track { width: 283px; }
  .quality b { left: 169px; width: 57px; } .quality u { left: 192px; }
  .check { width: 16px; height: 16px; border: 1px solid #ccc; margin-right: 4px; flex: none; }
  .check svg { width: 14px; height: 14px; }
  .av { margin-top: 15px; width: 373px; height: 104px; border: solid #ddd; border-width: 2px 0; display: flex; }
  .audio { width: 70px; padding-top: 14px; }
  .micbox { margin-top: 3px; width: 55px; height: 40px; border: 1px solid #c4c4c4; display: flex; align-items: center; justify-content: space-between; padding: 0 3px 0 6px; }
  .web { padding-top: 13px; }
  .webrow { display: flex; align-items: center; height: 22px; margin-top: 5px; }
  .cams { width: 212px; margin: 0 3px 0 6px; padding-right: 7px; }
  .preview { width: 63px; justify-content: center; }
  .sep { margin-top: 9px; }
  .shot { margin-top: 9px; }
  .shots { display: flex; margin-top: 6px; height: 30px; color: #666; align-items: center; }
  .shots i { width: 36px; display: grid; place-items: center; }
  .shots .tiny { width: 12px; } .tiny b { width: 2px; height: 2px; background: #ccc; }
  .out { display: flex; height: 22px; width: 444px; line-height: 21px; }
  .out div { border: 1px solid #c4c4c4; }
  .out .o1 { width: 110px; display: flex; align-items: center; gap: 8px; padding-left: 4px; border-left: 0; border-right: 0; }
  .o2 { width: 284px; padding-left: 7px; color: #8a8a8a; }
  .o3 { width: 50px; display: flex; align-items: center; justify-content: center; gap: 2px; }
  .o3 b { width: 4px; height: 4px; border-radius: 50%; background: #222; }
  .tip { position: absolute; left: 62px; top: 50px; width: 77px; height: 24px; border: 1px solid #a8dbf3; background: rgba(255, 255, 255, .45); color: #b2b2b2; line-height: 22px; padding-left: 5px; letter-spacing: 0; }
  .cursor { position: absolute; left: 52px; top: 21px; width: 18px; height: 24px; }
</style>
